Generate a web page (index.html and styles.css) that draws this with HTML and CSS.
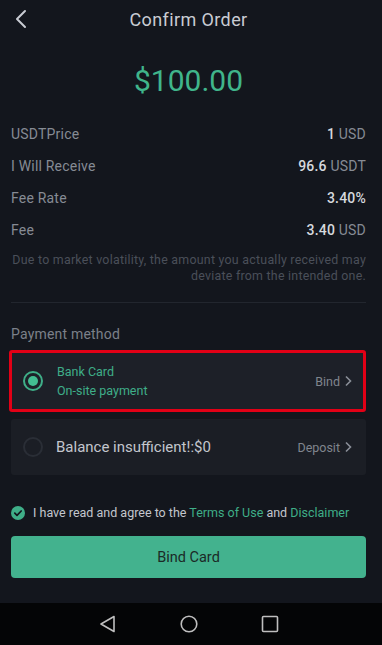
FILE: index.html
```html
<!DOCTYPE html>
<html>
<head>
<meta charset="utf-8">
<link rel="stylesheet" href="styles.css">
</head>
<body>
<div class="app">
  <header class="header">
    <svg class="back" width="14" height="20" viewBox="0 0 14 20"><path d="M10 2 L2 10 L10 18" fill="none" stroke="#c9ccd3" stroke-width="2" stroke-linecap="round" stroke-linejoin="round"/></svg>
    <div class="title">Confirm Order</div>
  </header>
  <div class="amount">$100.00</div>
  <div class="rows">
    <div class="row"><span class="label">USDTPrice</span><span class="val"><b>1</b> USD</span></div>
    <div class="row"><span class="label">I Will Receive</span><span class="val"><b>96.6</b> USDT</span></div>
    <div class="row"><span class="label">Fee Rate</span><span class="val"><b>3.40%</b></span></div>
    <div class="row"><span class="label">Fee</span><span class="val"><b>3.40</b> USD</span></div>
  </div>
  <p class="note">Due to market volatility, the amount you actually received may deviate from the intended one.</p>
  <div class="divider"></div>
  <div class="section">Payment method</div>
  <div class="card selected">
    <span class="radio on"></span>
    <div class="ctext">
      <div class="green">Bank Card</div>
      <div class="green">On-site payment</div>
    </div>
    <span class="action">Bind <svg width="8" height="12" viewBox="0 0 8 12"><path d="M2 1.5 L6.5 6 L2 10.5" fill="none" stroke="#8a8f98" stroke-width="1.6"/></svg></span>
  </div>
  <div class="card plain">
    <span class="radio"></span>
    <div class="ctext big">Balance insufficient!:$0</div>
    <span class="action">Deposit <svg width="8" height="12" viewBox="0 0 8 12"><path d="M2 1.5 L6.5 6 L2 10.5" fill="none" stroke="#8a8f98" stroke-width="1.6"/></svg></span>
  </div>
  <div class="agree">
    <svg width="14" height="14" viewBox="0 0 14 14"><circle cx="7" cy="7" r="7" fill="#3fae88"/><path d="M3.8 7.2 L6 9.3 L10.2 5" fill="none" stroke="#13161d" stroke-width="1.7" stroke-linecap="round" stroke-linejoin="round"/></svg>
    <span>I have read and agree to the <span class="link">Terms of Use</span> and <span class="link">Disclaimer</span></span>
  </div>
  <button class="btn">Bind Card</button>
</div>
<nav class="navbar">
  <svg width="18" height="18" viewBox="0 0 18 18"><path d="M15 1.5 L2 9 L15 16.5 Z" fill="none" stroke="#bfbfbf" stroke-width="1.6" stroke-linejoin="round"/></svg>
  <svg width="18" height="18" viewBox="0 0 18 18"><circle cx="9" cy="9" r="7.8" fill="none" stroke="#bfbfbf" stroke-width="1.6"/></svg>
  <svg width="18" height="18" viewBox="0 0 18 18"><rect x="1.5" y="1.5" width="15" height="15" rx="1" fill="none" stroke="#bfbfbf" stroke-width="1.6"/></svg>
</nav>
</body>
</html>
```
FILE: styles.css
```css
* { box-sizing: border-box; }
html, body { margin: 0; padding: 0; }
body {
  width: 382px;
  height: 645px;
  background: #13161d;
  font-family: Roboto, "Noto Sans", sans-serif;
  display: flex;
  flex-direction: column;
  overflow: hidden;
}
.app {
  flex: 1;
  padding: 0 16px 0 11px;
  display: flex;
  flex-direction: column;
}
.header {
  position: relative;
  height: 38px;
  display: flex;
  align-items: center;
  justify-content: center;
}
.back { position: absolute; left: 4px; top: 9px; }
.title { color: #c9ccd3; font-size: 18px; letter-spacing: 0.4px; }
.amount {
  margin-top: 25px;
  text-align: center;
  color: #40b58b;
  font-size: 30px;
  line-height: 36px;
}
.rows { margin-top: 26px; display: flex; flex-direction: column; gap: 14px; }
.row {
  display: flex;
  justify-content: space-between;
  height: 18px;
  line-height: 18px;
  font-size: 14px;
  letter-spacing: 0.2px;
}
.label { color: #868b94; }
.val { color: #868b94; }
.val b { color: #d6d9de; font-weight: 500; }
.note {
  margin: 13px 0 0;
  text-align: right;
  color: #4a4f59;
  font-size: 12.4px;
  letter-spacing: 0.25px;
  line-height: 16px;
}
.divider { margin-top: 18px; height: 1px; background: #22262e; }
.section { margin-top: 22px; color: #7b8089; font-size: 14px; line-height: 18px; letter-spacing: 0.2px; }
.card {
  display: flex;
  align-items: center;
  border-radius: 3px;
}
.card.selected {
  margin: 7px 0 0 -2px;
  height: 62px;
  border: 3px solid #e20016;
  background: #1d2028;
  padding: 0 11px 0 11px;
}
.card.plain {
  margin-top: 7px;
  height: 56px;
  background: #1b1e25;
  padding: 0 14px 0 12px;
}
.radio {
  width: 20px;
  height: 20px;
  border-radius: 50%;
  border: 2px solid #2a2e36;
  flex: none;
  display: flex;
  align-items: center;
  justify-content: center;
}
.radio.on { border-color: #3fae88; }
.radio.on::after {
  content: "";
  width: 10px;
  height: 10px;
  border-radius: 50%;
  background: #43bd92;
}
.ctext { flex: 1; margin-left: 14px; font-size: 12.5px; line-height: 19px; }
.green { color: #3fae88; }
.ctext.big { color: #c3c6cd; font-size: 15px; margin-left: 13px; }
.action {
  color: #80858e;
  font-size: 12.5px;
  display: flex;
  align-items: center;
  gap: 4px;
}
.agree {
  margin-top: 30px;
  display: flex;
  align-items: center;
  gap: 8px;
  color: #c3c6cd;
  font-size: 12.5px;
  line-height: 16px;
}
.link { color: #3fae88; }
.btn {
  margin-top: 15px;
  height: 42px;
  border: none;
  border-radius: 4px;
  background: #43b28e;
  color: #1b2a26;
  font-family: Roboto, "Noto Sans", sans-serif;
  font-size: 14.5px;
}
.navbar {
  height: 42px;
  background: #040506;
  display: flex;
  align-items: center;
  justify-content: center;
  gap: 63px;
  padding-right: 4px;
}
```
